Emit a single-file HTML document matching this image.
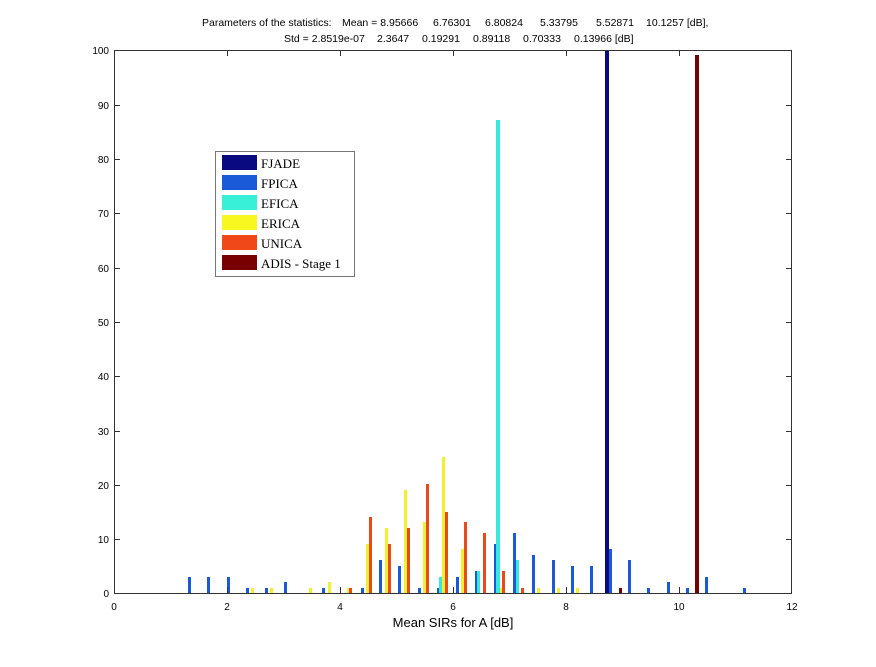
<!DOCTYPE html>
<html><head><meta charset="utf-8"><style>
html,body{margin:0;padding:0;background:#fff;}
svg{display:block;}
</style></head><body>
<svg width="876" height="667" xmlns="http://www.w3.org/2000/svg" font-family="Liberation Sans, sans-serif">
<rect width="876" height="667" fill="#fff"/>
<g font-size="10.5">
<text x="202" y="26">Parameters of the statistics:</text>
<text x="342" y="26">Mean = 8.95666</text>
<text x="433" y="26">6.76301</text>
<text x="485" y="26">6.80824</text>
<text x="540" y="26">5.33795</text>
<text x="596" y="26">5.52871</text>
<text x="646" y="26">10.1257 [dB],</text>
<text x="284" y="42">Std = 2.8519e-07</text>
<text x="377" y="42">2.3647</text>
<text x="422" y="42">0.19291</text>
<text x="473" y="42">0.89118</text>
<text x="523" y="42">0.70333</text>
<text x="574" y="42">0.13966 [dB]</text>
</g>
<g fill="#1a5ad8">
<rect x="188" y="577" width="3" height="16"/><rect x="207" y="577" width="3" height="16"/><rect x="227" y="577" width="3" height="16"/>
<rect x="246" y="588" width="3" height="5"/><rect x="265" y="588" width="3" height="5"/><rect x="284" y="582" width="3" height="11"/>
<rect x="322" y="588" width="3" height="5"/><rect x="361" y="588" width="3" height="5"/><rect x="379" y="560" width="3" height="33"/>
<rect x="398" y="566" width="3" height="27"/><rect x="418" y="588" width="3" height="5"/><rect x="437" y="588" width="3" height="5"/>
<rect x="456" y="577" width="3" height="16"/><rect x="475" y="571" width="3" height="22"/><rect x="494" y="544" width="3" height="49"/>
<rect x="513" y="533" width="3" height="60"/><rect x="532" y="555" width="3" height="38"/><rect x="552" y="560" width="3" height="33"/>
<rect x="571" y="566" width="3" height="27"/><rect x="590" y="566" width="3" height="27"/><rect x="609" y="549" width="3" height="44"/>
<rect x="628" y="560" width="3" height="33"/><rect x="647" y="588" width="3" height="5"/><rect x="667" y="582" width="3" height="11"/>
<rect x="686" y="588" width="3" height="5"/><rect x="705" y="577" width="3" height="16"/><rect x="743" y="588" width="3" height="5"/>
</g>
<g fill="#f0f030">
<rect x="251" y="588" width="3" height="5"/><rect x="270" y="588" width="3" height="5"/><rect x="309" y="588" width="3" height="5"/>
<rect x="328" y="582" width="3" height="11"/><rect x="347" y="588" width="3" height="5"/><rect x="366" y="544" width="3" height="49"/>
<rect x="385" y="528" width="3" height="65"/><rect x="404" y="490" width="3" height="103"/><rect x="423" y="522" width="3" height="71"/>
<rect x="442" y="457" width="3" height="136"/><rect x="461" y="549" width="3" height="44"/><rect x="499" y="588" width="3" height="5"/>
<rect x="537" y="588" width="3" height="5"/><rect x="557" y="588" width="3" height="5"/><rect x="576" y="588" width="3" height="5"/>
</g>
<g fill="#e84a1a">
<rect x="349" y="588" width="3" height="5"/><rect x="369" y="517" width="3" height="76"/><rect x="388" y="544" width="3" height="49"/>
<rect x="407" y="528" width="3" height="65"/><rect x="426" y="484" width="3" height="109"/><rect x="445" y="512" width="3" height="81"/>
<rect x="464" y="522" width="3" height="71"/><rect x="483" y="533" width="3" height="60"/><rect x="502" y="571" width="3" height="22"/>
<rect x="521" y="588" width="3" height="5"/>
</g>
<g fill="#38e8d8">
<rect x="439" y="577" width="3" height="16"/><rect x="477" y="571" width="3" height="22"/><rect x="496" y="120" width="4" height="473"/><rect x="516" y="560" width="3" height="33"/>
</g>
<rect x="605" y="50" width="4" height="543" fill="#0a0a80"/>
<rect x="619" y="588" width="3" height="5" fill="#780000"/>
<rect x="695" y="55" width="4" height="538" fill="#780000"/>
<rect x="114.5" y="50.5" width="677" height="543" fill="none" stroke="#333" stroke-width="1"/>
<g stroke="#333" stroke-width="1">
<line x1="227.5" y1="50" x2="227.5" y2="56"/><line x1="340.5" y1="50" x2="340.5" y2="56"/><line x1="453.5" y1="50" x2="453.5" y2="56"/><line x1="566.5" y1="50" x2="566.5" y2="56"/><line x1="679.5" y1="50" x2="679.5" y2="56"/>
<line x1="227.5" y1="593" x2="227.5" y2="587"/><line x1="340.5" y1="593" x2="340.5" y2="587"/><line x1="453.5" y1="593" x2="453.5" y2="587"/><line x1="566.5" y1="593" x2="566.5" y2="587"/><line x1="679.5" y1="593" x2="679.5" y2="587"/>
<line x1="114" y1="539.5" x2="120" y2="539.5"/><line x1="114" y1="485.5" x2="120" y2="485.5"/><line x1="114" y1="431.5" x2="120" y2="431.5"/><line x1="114" y1="376.5" x2="120" y2="376.5"/><line x1="114" y1="322.5" x2="120" y2="322.5"/><line x1="114" y1="268.5" x2="120" y2="268.5"/><line x1="114" y1="213.5" x2="120" y2="213.5"/><line x1="114" y1="159.5" x2="120" y2="159.5"/><line x1="114" y1="105.5" x2="120" y2="105.5"/>
<line x1="792" y1="539.5" x2="786" y2="539.5"/><line x1="792" y1="485.5" x2="786" y2="485.5"/><line x1="792" y1="431.5" x2="786" y2="431.5"/><line x1="792" y1="376.5" x2="786" y2="376.5"/><line x1="792" y1="322.5" x2="786" y2="322.5"/><line x1="792" y1="268.5" x2="786" y2="268.5"/><line x1="792" y1="213.5" x2="786" y2="213.5"/><line x1="792" y1="159.5" x2="786" y2="159.5"/><line x1="792" y1="105.5" x2="786" y2="105.5"/>
</g>
<g font-size="10" text-anchor="end">
<text x="109" y="597">0</text><text x="109" y="543">10</text><text x="109" y="489">20</text><text x="109" y="435">30</text><text x="109" y="380">40</text><text x="109" y="326">50</text><text x="109" y="272">60</text><text x="109" y="217">70</text><text x="109" y="163">80</text><text x="109" y="109">90</text><text x="109" y="54">100</text>
</g>
<g font-size="10" text-anchor="middle">
<text x="114" y="610">0</text><text x="227" y="610">2</text><text x="340" y="610">4</text><text x="453" y="610">6</text><text x="566" y="610">8</text><text x="679" y="610">10</text><text x="792" y="610">12</text>
</g>
<text x="453" y="627" font-size="13" text-anchor="middle">Mean SIRs for A [dB]</text>
<rect x="215.5" y="151.5" width="139" height="125" fill="#fff" stroke="#777"/>
<rect x="222" y="155" width="35" height="15" fill="#0a0a80"/>
<rect x="222" y="175" width="35" height="15" fill="#1a5ad8"/>
<rect x="222" y="195" width="35" height="15" fill="#38f0d8"/>
<rect x="222" y="215" width="35" height="15" fill="#f8f820"/>
<rect x="222" y="235" width="35" height="15" fill="#f04818"/>
<rect x="222" y="255" width="35" height="15" fill="#780000"/>
<g font-family="Liberation Serif, serif" font-size="13">
<text x="261" y="168">FJADE</text><text x="261" y="188">FPICA</text><text x="261" y="208">EFICA</text><text x="261" y="228">ERICA</text><text x="261" y="248">UNICA</text><text x="261" y="268">ADIS - Stage 1</text>
</g>
</svg>
</body></html>
